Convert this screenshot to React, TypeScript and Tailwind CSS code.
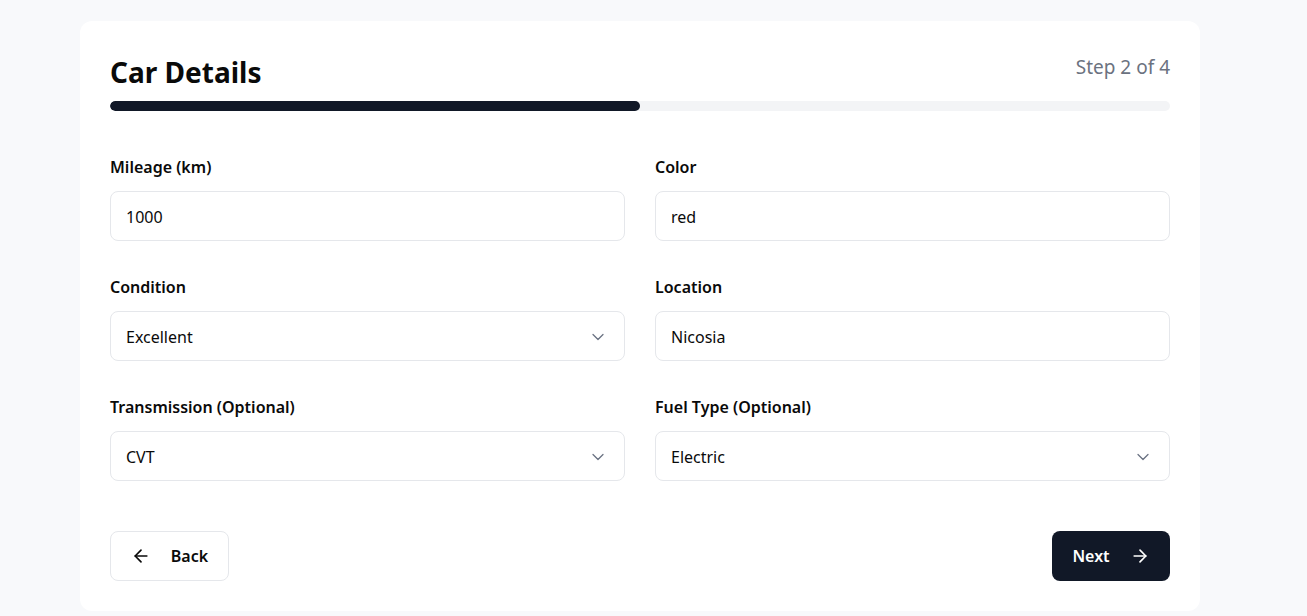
import { ArrowLeft, ArrowRight, ChevronDown } from "lucide-react";

const font = { fontFamily: '"Noto Sans", "Open Sans", sans-serif' };

function Field({ label, value, select }: { label: string; value: string; select?: boolean }) {
  return (
    <div className="flex flex-col">
      <label className="text-base font-semibold text-[#0a0a0a] leading-6 mb-3">{label}</label>
      <div className="h-[50px] rounded-lg border border-[#e5e7eb] bg-white pl-[15px] pr-4 pt-[1px] flex items-center justify-between text-base text-[#0a0a0a]">
        <span>{value}</span>
        {select && <ChevronDown className="w-5 h-5 text-gray-500" strokeWidth={1.5} />}
      </div>
    </div>
  );
}

export default function App() {
  return (
    <div className="min-h-screen bg-[#f8f9fb] pt-[21px]" style={font}>
      <div className="ml-[80px] w-[1120px] bg-white rounded-xl px-[30px] pt-[30px] pb-[30px]">
        <div className="flex justify-between items-start">
          <h1 className="text-[28px] font-bold text-[#0a0a0a] leading-9 mt-[3px]">Car Details</h1>
          <span className="text-[19px] text-[#6b7280] leading-7 mt-[2px]">Step 2 of 4</span>
        </div>
        <div className="mt-[11px] h-[10px] rounded-full bg-[#f3f4f6] overflow-hidden">
          <div className="h-full bg-[#111827] rounded-full" style={{ width: "50%" }} />
        </div>
        <div className="grid grid-cols-2 gap-x-[30px] gap-y-[34px] mt-[44px]">
          <Field label="Mileage (km)" value="1000" />
          <Field label="Color" value="red" />
          <Field label="Condition" value="Excellent" select />
          <Field label="Location" value="Nicosia" />
          <Field label="Transmission (Optional)" value="CVT" select />
          <Field label="Fuel Type (Optional)" value="Electric" select />
        </div>
        <div className="flex justify-between mt-[50px]">
          <button className="h-[50px] w-[119px] rounded-lg border border-[#e5e7eb] bg-white flex items-center justify-center gap-[20px] font-semibold text-base text-[#0a0a0a]">
            <ArrowLeft className="w-5 h-5" strokeWidth={2} />
            Back
          </button>
          <button className="h-[50px] w-[118px] rounded-lg bg-[#111827] flex items-center justify-center gap-[20px] font-semibold text-base text-white">
            Next
            <ArrowRight className="w-5 h-5" strokeWidth={2} />
          </button>
        </div>
      </div>
    </div>
  );
}
